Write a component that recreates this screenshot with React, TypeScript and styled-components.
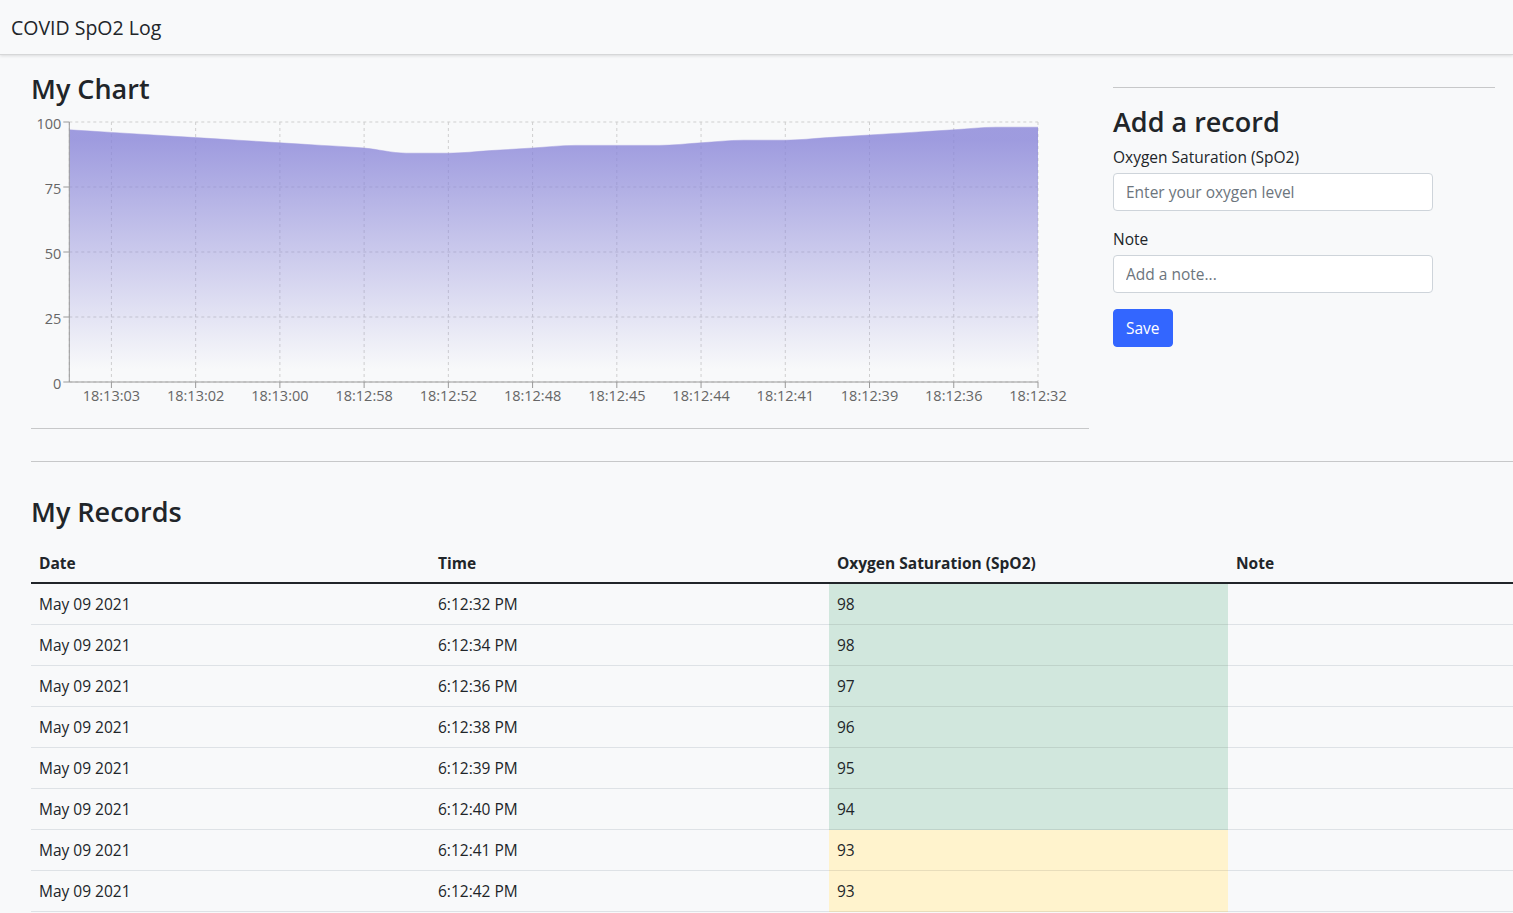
import React from "react";
import styled, { createGlobalStyle } from "styled-components";

const GlobalStyle = createGlobalStyle`
  html, body {
    margin: 0;
    padding: 0;
    overflow: hidden;
    background: #f8f9fa;
  }
  body {
    font-family: "Open Sans", "Noto Sans", sans-serif;
    font-size: 16px;
    line-height: 1.5;
    color: #212529;
  }
  * { box-sizing: border-box; }
`;

const Navbar = styled.nav`
  height: 55px;
  display: flex;
  align-items: center;
  padding: 2px 11px 0;
  background: #f8f9fa;
  border-bottom: 1px solid #d6d7d8;
  box-shadow: 0 1px 3px rgba(0, 0, 0, 0.12);
`;

const Brand = styled.span`
  font-size: 19.5px;
  line-height: 1;
  color: #212529;
`;

const Main = styled.main`
  padding: 17px 0 0 31px;
`;

const TopRow = styled.div`
  display: flex;
  gap: 24px;
  align-items: flex-start;
`;

const ChartCol = styled.section`
  width: 1058px;
  flex: none;
`;

const FormCol = styled.section`
  width: 382px;
  flex: none;
`;

const Heading = styled.h3<{ $mb: number }>`
  margin: 0 0 ${(p) => p.$mb}px;
  font-size: 27px;
  font-weight: 600;
  line-height: 33.6px;
  color: #212529;
`;

const Rule = styled.hr<{ $mt: number; $mb: number; $wide?: boolean }>`
  margin: ${(p) => p.$mt}px 0 ${(p) => p.$mb}px;
  border: 0;
  border-top: 1px solid #c7c8c9;
  width: ${(p) => (p.$wide ? "1596px" : "100%")};
`;

const Field = styled.div`
  margin-bottom: 16px;
`;

const Label = styled.label`
  display: block;
  margin-bottom: 4px;
  font-size: 15.5px;
  line-height: 24px;
  color: #212529;
`;

const Input = styled.input`
  display: block;
  width: 320px;
  height: 38px;
  padding: 6px 12px;
  font-family: inherit;
  font-size: 15.5px;
  line-height: 24px;
  color: #212529;
  background: #fff;
  border: 1px solid #ced4da;
  border-radius: 4px;
  &::placeholder {
    color: #6c757d;
  }
`;

const Button = styled.button`
  height: 38px;
  padding: 6px 12px;
  font-family: inherit;
  font-size: 15.5px;
  line-height: 24px;
  color: #fff;
  background: #3366ff;
  border: 1px solid #3366ff;
  border-radius: 4px;
`;

const Records = styled.section`
  width: 1596px;
`;

const Table = styled.table`
  width: 1596px;
  table-layout: fixed;
  border-collapse: collapse;
  color: #212529;
`;

const Th = styled.th`
  text-align: left;
  font-weight: 700;
  font-size: 15.5px;
  padding: 9px 8px 7px;
  line-height: 24px;
  border-bottom: 2px solid #212529;
`;

const Td = styled.td<{ $tone?: "success" | "warning" | "danger" }>`
  padding: 8px;
  font-size: 15.5px;
  line-height: 24px;
  background: ${(p) =>
    p.$tone === "success"
      ? "#d1e7dd"
      : p.$tone === "warning"
      ? "#fff3cd"
      : p.$tone === "danger"
      ? "#f8d7da"
      : "transparent"};
  border-bottom: 1px solid
    ${(p) =>
      p.$tone === "success"
        ? "#bfd3ca"
        : p.$tone === "warning"
        ? "#e8ddbb"
        : p.$tone === "danger"
        ? "#e2c4c6"
        : "#dee2e6"};
`;

const ChartSvg = styled.svg`
  display: block;
  font-family: "Open Sans", "Noto Sans", sans-serif;
`;

/* ---------- data ---------- */

const labels = [
  "18:13:04", "18:13:03", "18:13:02", "18:13:02", "18:13:01", "18:13:00",
  "18:12:59", "18:12:58", "18:12:55", "18:12:52", "18:12:50", "18:12:48",
  "18:12:46", "18:12:45", "18:12:44", "18:12:44", "18:12:42", "18:12:41",
  "18:12:40", "18:12:39", "18:12:38", "18:12:36", "18:12:34", "18:12:32",
];

const values = [
  97, 96, 95, 94, 93, 92, 91, 90, 88, 88, 89, 90,
  91, 91, 91, 92, 93, 93, 94, 95, 96, 97, 98, 98,
];

const toPm = (l: string) => {
  const [h, m, s] = l.split(":");
  return `${Number(h) - 12}:${m}:${s} PM`;
};

const records = labels
  .map((l, i) => ({ time: toPm(l), value: values[i] }))
  .reverse()
  .slice(0, 8);

/* ---------- chart ---------- */

const CW = 1058;
const CH = 300;
const PL = 38.3;
const PR = 1007;
const PT = 10;
const PB = 270;

const xAt = (i: number) => PL + (i * (PR - PL)) / (values.length - 1);
const yAt = (v: number) => PB - (v / 100) * (PB - PT);

function monotonePath(pts: [number, number][]) {
  const n = pts.length;
  const t: number[] = new Array(n).fill(0);
  const sign = (x: number) => (x < 0 ? -1 : 1);
  for (let i = 1; i < n - 1; i++) {
    const [x0, y0] = pts[i - 1];
    const [x1, y1] = pts[i];
    const [x2, y2] = pts[i + 1];
    const h0 = x1 - x0;
    const h1 = x2 - x1;
    const s0 = (y1 - y0) / h0;
    const s1 = (y2 - y1) / h1;
    const p = (s0 * h1 + s1 * h0) / (h0 + h1);
    t[i] =
      (sign(s0) + sign(s1)) *
        Math.min(Math.abs(s0), Math.abs(s1), 0.5 * Math.abs(p)) || 0;
  }
  const s2 = (a: [number, number], b: [number, number], tt: number) => {
    const h = b[0] - a[0];
    return h ? (3 * (b[1] - a[1]) / h - tt) / 2 : tt;
  };
  t[0] = s2(pts[0], pts[1], t[1]);
  t[n - 1] = s2(pts[n - 2], pts[n - 1], t[n - 2]);
  let d = `M${pts[0][0]},${pts[0][1]}`;
  for (let i = 0; i < n - 1; i++) {
    const [x0, y0] = pts[i];
    const [x1, y1] = pts[i + 1];
    const dx = (x1 - x0) / 3;
    d += `C${x0 + dx},${y0 + dx * t[i]},${x1 - dx},${y1 - dx * t[i + 1]},${x1},${y1}`;
  }
  return d;
}

function SpO2Chart() {
  const pts = values.map((v, i) => [xAt(i), yAt(v)] as [number, number]);
  const line = monotonePath(pts);
  const area = `${line}L${xAt(values.length - 1)},${PB}L${xAt(0)},${PB}Z`;
  const shown = values.map((_, i) => i).filter((i) => i % 2 === 1);
  const yTicks = [0, 25, 50, 75, 100];
  return (
    <ChartSvg width={CW} height={CH} viewBox={`0 0 ${CW} ${CH}`}>
      <defs>
        <linearGradient id="spo2Fill" x1="0" y1="0" x2="0" y2="1">
          <stop offset="5%" stopColor="#8884d8" stopOpacity={0.8} />
          <stop offset="95%" stopColor="#8884d8" stopOpacity={0} />
        </linearGradient>
      </defs>
      <g stroke="#cfcfcf" strokeDasharray="3 3" fill="none">
        {yTicks.map((v) => (
          <line key={v} x1={PL} x2={PR} y1={yAt(v)} y2={yAt(v)} />
        ))}
        {shown.map((i) => (
          <line key={i} x1={xAt(i)} x2={xAt(i)} y1={PT} y2={PB} />
        ))}
        <line x1={PL} x2={PL} y1={PT} y2={PB} />
      </g>
      <path d={area} fill="url(#spo2Fill)" stroke="none" />
      <path d={line} fill="none" stroke="#a39ddf" strokeWidth={1} opacity={0.5} />
      <g stroke="#9a9a9a" fill="none">
        <line x1={PL} x2={PL} y1={PT} y2={PB} />
        <line x1={PL} x2={PR} y1={PB} y2={PB} />
        {yTicks.map((v) => (
          <line key={v} x1={PL - 6} x2={PL} y1={yAt(v)} y2={yAt(v)} />
        ))}
        {shown.map((i) => (
          <line key={i} x1={xAt(i)} x2={xAt(i)} y1={PB} y2={PB + 6} />
        ))}
      </g>
      <g fill="#666" fontSize="14.5">
        {yTicks.map((v) => (
          <text key={v} x={PL - 8} y={yAt(v)} dy="0.45em" textAnchor="end">
            {v}
          </text>
        ))}
        {shown.map((i) => (
          <text key={i} x={xAt(i)} y={PB + 8} dy="0.78em" textAnchor="middle">
            {labels[i]}
          </text>
        ))}
      </g>
    </ChartSvg>
  );
}

const tone = (v: number): "success" | "warning" | "danger" =>
  v >= 94 ? "success" : v >= 90 ? "warning" : "danger";

export default function App() {
  return (
    <>
      <GlobalStyle />
      <Navbar>
        <Brand>COVID SpO2 Log</Brand>
      </Navbar>
      <Main>
        <TopRow>
          <ChartCol>
            <Heading $mb={6}>My Chart</Heading>
            <SpO2Chart />
            <Rule $mt={16} $mb={0} />
          </ChartCol>
          <FormCol>
            <Rule $mt={15} $mb={17} />
            <Heading $mb={6}>Add a record</Heading>
            <Field>
              <Label htmlFor="spo2">Oxygen Saturation (SpO2)</Label>
              <Input id="spo2" type="text" placeholder="Enter your oxygen level" />
            </Field>
            <Field>
              <Label htmlFor="note">Note</Label>
              <Input id="note" type="text" placeholder="Add a note..." />
            </Field>
            <Button type="button">Save</Button>
          </FormCol>
        </TopRow>
        <Rule $mt={32} $mb={33} $wide />
        <Records>
          <Heading $mb={14}>My Records</Heading>
          <Table>
            <thead>
              <tr>
                <Th>Date</Th>
                <Th>Time</Th>
                <Th>Oxygen Saturation (SpO2)</Th>
                <Th>Note</Th>
              </tr>
            </thead>
            <tbody>
              {records.map((r, i) => (
                <tr key={i}>
                  <Td>May 09 2021</Td>
                  <Td>{r.time}</Td>
                  <Td $tone={tone(r.value)}>{r.value}</Td>
                  <Td></Td>
                </tr>
              ))}
            </tbody>
          </Table>
        </Records>
      </Main>
    </>
  );
}
